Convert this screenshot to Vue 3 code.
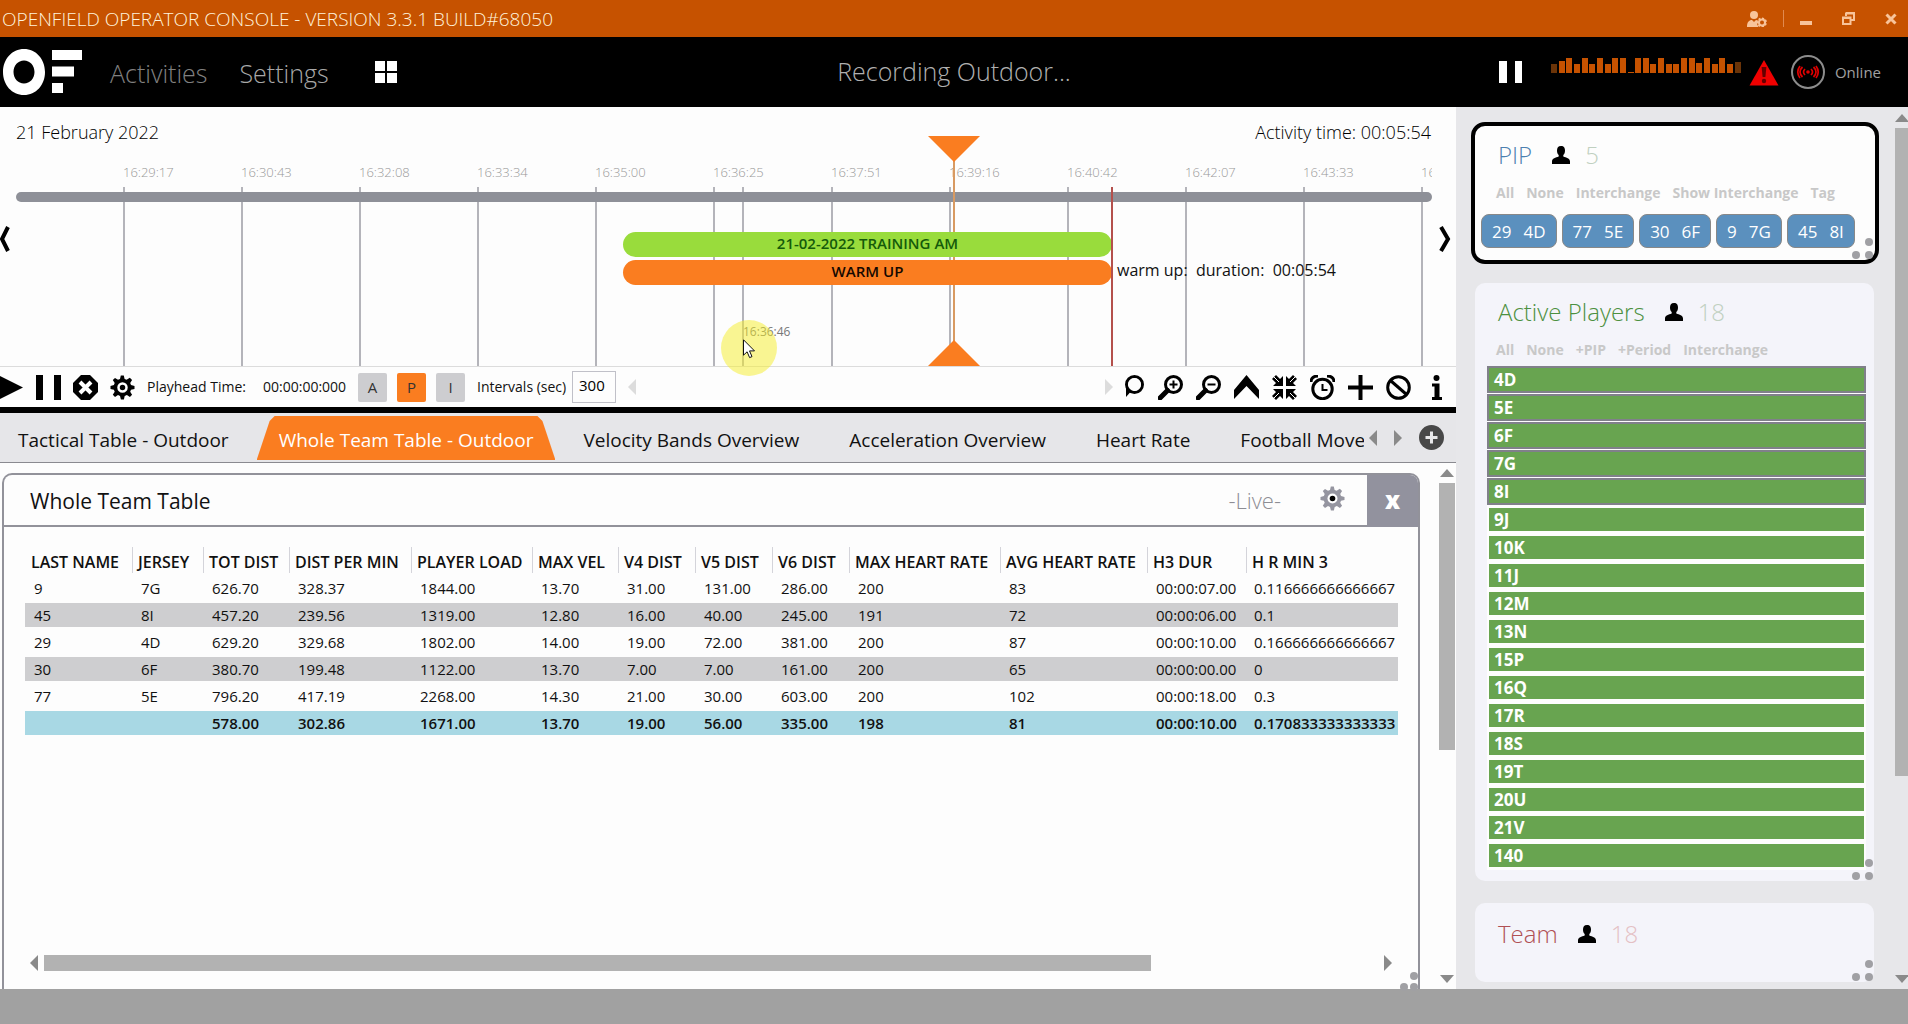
<script setup>
import { ref } from 'vue'

const signal = [9, 12, 15, 9, 15, 9, 15, 9, 15, 15, 1, 15, 15, 9, 15, 9, 9, 15, 15, 10, 15, 9, 15, 9, 11]

const span = 1456
const scaleSpan = 1432
const pct = (x, of = span) => (x / of) * 100 + '%'
const ticks = ['16:29:17', '16:30:43', '16:32:08', '16:33:34', '16:35:00', '16:36:25', '16:37:51', '16:39:16', '16:40:42', '16:42:07', '16:43:33', '16:44:58']
  .map((label, i) => ({ label, left: pct(123 + i * 118, scaleSpan) }))

const interval = ref(300)

const tabs = [
  { label: 'Tactical Table - Outdoor' },
  { label: 'Whole Team Table - Outdoor', active: true },
  { label: 'Velocity Bands Overview' },
  { label: 'Acceleration Overview' },
  { label: 'Heart Rate' },
  { label: 'Football Move' },
]

const columns = [
  { label: 'LAST NAME', width: 107 },
  { label: 'JERSEY', width: 71 },
  { label: 'TOT DIST', width: 86 },
  { label: 'DIST PER MIN', width: 122 },
  { label: 'PLAYER LOAD', width: 121 },
  { label: 'MAX VEL', width: 86 },
  { label: 'V4 DIST', width: 77 },
  { label: 'V5 DIST', width: 77 },
  { label: 'V6 DIST', width: 77 },
  { label: 'MAX HEART RATE', width: 151 },
  { label: 'AVG HEART RATE', width: 147 },
  { label: 'H3 DUR', width: 99 },
  { label: 'H R MIN 3', width: 152 },
]
const rows = [
  ['9', '7G', '626.70', '328.37', '1844.00', '13.70', '31.00', '131.00', '286.00', '200', '83', '00:00:07.00', '0.116666666666667'],
  ['45', '8I', '457.20', '239.56', '1319.00', '12.80', '16.00', '40.00', '245.00', '191', '72', '00:00:06.00', '0.1'],
  ['29', '4D', '629.20', '329.68', '1802.00', '14.00', '19.00', '72.00', '381.00', '200', '87', '00:00:10.00', '0.166666666666667'],
  ['30', '6F', '380.70', '199.48', '1122.00', '13.70', '7.00', '7.00', '161.00', '200', '65', '00:00:00.00', '0'],
  ['77', '5E', '796.20', '417.19', '2268.00', '14.30', '21.00', '30.00', '603.00', '200', '102', '00:00:18.00', '0.3'],
]
const totals = ['', '', '578.00', '302.86', '1671.00', '13.70', '19.00', '56.00', '335.00', '198', '81', '00:00:10.00', '0.170833333333333']

const pip = [['29', '4D'], ['77', '5E'], ['30', '6F'], ['9', '7G'], ['45', '8I']]
const pipActions = ['All', 'None', 'Interchange', 'Show Interchange', 'Tag']
const activeActions = ['All', 'None', '+PIP', '+Period', 'Interchange']
const players = ['4D', '5E', '6F', '7G', '8I', '9J', '10K', '11J', '12M', '13N', '15P', '16Q', '17R', '18S', '19T', '20U', '21V', '140']
  .map((name, i) => ({ name, selected: i < 5 }))

const person = 'M9 0c3 0 4 2 4 4.500c0 2-.6 3.500-1.700 4.500v1.500c3 1 6.700 2 6.700 5V18H0v-2.500c0-3 3.700-4 6.700-5V9C5.600 8 5 6.500 5 4.500C5 2 6 0 9 0z'
const gear = 'M10.800 0.500h3l.8 3.400 2 .8L19.800 2.800l2.300 2.200-1.900 3 .8 2 3.500.9v3l-3.500.8-.8 2 1.900 3-2.200 2.300-3-1.900-2.200.9-.8 3.400h-3l-.9-3.400-2-.9-3 1.900-2.200-2.300 1.900-3-.8-2L.500 14v-3l3.400-.9.8-2-1.900-3L5 2.900l3 1.800 2-.8z'
</script>

<template>
  <div class="app">
    <header class="titlebar">
      <h1 class="app-title">OPENFIELD OPERATOR CONSOLE - VERSION 3.3.1 BUILD#68050</h1>
      <div class="window-tools">
        <button class="bare" aria-label="Account">
          <svg width="20" height="16" viewBox="0 0 20 16"><circle cx="7" cy="4" r="4" /><path d="M0 16c0-5 2-7 5-7l2 2 2-2 2 .5-1 3.500 1.500 3z" /><circle cx="15" cy="11.500" r="3" fill="none" class="tool-line" /><path class="tool-line" stroke-dasharray="2 1.500" fill="none" d="M15 7.500a4 4 0 1 1-.1 0" /></svg>
        </button>
        <span class="divider"></span>
        <button class="bare" aria-label="Minimize"><svg width="12" height="14"><rect y="9" width="12" height="4" /></svg></button>
        <button class="bare" aria-label="Restore"><svg width="13" height="13" viewBox="0 0 13 13"><path class="tool-line" fill="none" d="M4 4V1.500h8V8H9.500M1 5.500h7.500V12H1z" /><path d="M0 5h9v2H0zM4 0h9v2H4z" /></svg></button>
        <button class="bare" aria-label="Close"><svg width="12" height="12" viewBox="0 0 12 12"><path d="M1.500 1.500l9 9M10.500 1.500l-9 9" class="close-line" /></svg></button>
      </div>
    </header>

    <div class="navbar">
      <nav class="nav">
        <svg class="logo" width="80" height="46" viewBox="0 0 80 46"><path fill="#fff" fill-rule="evenodd" d="M21 0c12 0 21 10 21 23s-9 23-21 23S0 36 0 23S9 0 21 0zM21 11.500c-6 0-10.500 5-10.500 11.500s4.500 11.500 10.500 11.500S31.500 29.500 31.500 23S27 11.500 21 11.500z" /><path fill="#fff" d="M49 1h30v10H49zM49 17.500h22v10H49zM49 34h11v10H49z" /></svg>
        <a href="#" class="nav-link dim">Activities</a>
        <a href="#" class="nav-link">Settings</a>
        <button class="bare tiles" aria-label="Layout"><svg width="22" height="22" fill="#fff"><path d="M0 0h10v10H0zM12 0h10v10H12zM0 12h10v10H0zM12 12h10v10H12z" /></svg></button>
      </nav>
      <p class="recording">Recording Outdoor...</p>
      <div class="status">
        <button class="bare" aria-label="Pause recording"><svg width="24" height="22" fill="#fff"><path d="M0 0h8v22H0zM16 0h7v22h-7z" /></svg></button>
        <div class="signal"><i v-for="(h, i) in signal" :key="i" :style="{ height: h + 'px' }"></i></div>
        <svg class="warning" width="30" height="27" viewBox="0 0 30 27"><path d="M15 1L29.500 26.500H.5z" fill="#f00000" /><path d="M12.600 8h4.800l-1 10h-2.800z" fill="#600" /><circle cx="15" cy="22" r="2.200" fill="#600" /></svg>
        <svg class="antenna" width="34" height="34" viewBox="0 0 34 34" fill="none"><circle cx="17" cy="17" r="16" stroke="#8c8c8c" stroke-width="2" /><circle cx="17" cy="17" r="1.800" fill="#e00000" /><path stroke="#e00000" stroke-width="1.700" d="M14 14c-2 2-2 4 0 6M20 14c2 2 2 4 0 6M11.500 12c-3.300 3-3.300 7 0 10M22.500 12c3.300 3 3.300 7 0 10M9 11c-3 4-3 8 0 12M25 11c3 4 3 8 0 12" /></svg>
        <span class="online">Online</span>
      </div>
    </div>

    <div class="body">
      <main class="workspace">
        <section class="timeline">
          <div class="timeline-head"><span>21 February 2022</span><span>Activity time: 00:05:54</span></div>
          <div class="canvas">
            <div class="scale">
              <div class="tick" v-for="t in ticks" :key="t.label" :style="{ left: t.left }"><time>{{ t.label }}</time></div>
              <div class="tick hover" :style="{ left: pct(742, scaleSpan) }"><time>16:36:46</time></div>
            </div>
            <div class="track"></div>
            <div class="playhead" :style="{ left: pct(953) }"></div>
            <div class="period training" :style="{ left: pct(623), width: pct(489) }">21-02-2022 TRAINING AM</div>
            <div class="period warmup" :style="{ left: pct(623), width: pct(489) }">WARM UP</div>
            <div class="end-line" :style="{ left: pct(1111) }"></div>
            <p class="duration" :style="{ left: pct(1117) }">warm up:&nbsp; duration:&nbsp; 00:05:54</p>
            <button class="bare pan left" aria-label="Earlier"><svg width="12" height="26" viewBox="0 0 12 26"><path d="M8 1L2 13l6 12" /></svg></button>
            <button class="bare pan right" aria-label="Later"><svg width="12" height="26" viewBox="0 0 12 26"><path d="M2 1l7 12-7 12" /></svg></button>
            <div class="halo" :style="{ left: pct(721) }"></div>
            <svg class="cursor" :style="{ left: pct(743) }" width="13" height="20" viewBox="0 0 13 20"><path d="M.5.800v15.400l3.600-3.400 2.500 5.800 2.400-1-2.500-5.700h5z" fill="#fff" stroke="#111" /></svg>
          </div>
        </section>

        <div class="controls">
          <div class="transport">
            <button class="bare" aria-label="Play"><svg width="23" height="25"><path d="M0 1l23 11.500L0 24z" /></svg></button>
            <button class="bare pause" aria-label="Pause"><svg width="25" height="25"><path d="M0 0h7v25H0zM18 0h7v25h-7z" /></svg></button>
            <button class="bare" aria-label="Stop"><svg width="25" height="25" viewBox="0 0 25 25"><path d="M8 0h9l8 8v9l-8 8H8l-8-8V8z" /><path d="M7 7l11 11M18 7L7 18" stroke="#fff" stroke-width="4" /></svg></button>
            <button class="bare" aria-label="Options"><svg width="25" height="25" viewBox="0 0 25 25"><path :d="gear" /><circle cx="12.500" cy="12.500" r="4" fill="none" stroke="#fff" stroke-width="2.500" /></svg></button>
            <span class="label play-label">Playhead Time:</span>
            <output class="label play-time">00:00:00:000</output>
            <button class="mode">A</button>
            <button class="mode on">P</button>
            <button class="mode">I</button>
            <label class="label int-label" for="interval">Intervals (sec)</label>
            <input id="interval" v-model="interval" type="text" class="interval" />
            <svg class="faint" width="8" height="16"><path d="M8 0v16L0 8z" /></svg>
          </div>
          <div class="tools">
            <svg class="faint more" width="8" height="16"><path d="M0 0v16l8-8z" /></svg>
            <button class="bare tool" aria-label="Zoom reset"><svg width="25" height="25" viewBox="0 0 25 25"><circle cx="14.500" cy="9.500" r="8" class="k3" /><path d="M6 9v13l4-4.500 4-1z" /><circle cx="14.500" cy="9.500" r="6.500" fill="#fdfdfd" /></svg></button>
            <button class="bare tool" aria-label="Zoom in"><svg width="25" height="25" viewBox="0 0 25 25"><circle cx="15.500" cy="9.500" r="8" class="k3" /><path d="M2 23l7.500-7.500" class="k4" /><path d="M11.500 9.500h8M15.500 5.500v8" class="k2" /></svg></button>
            <button class="bare tool" aria-label="Zoom out"><svg width="25" height="25" viewBox="0 0 25 25"><circle cx="15.500" cy="9.500" r="8" class="k3" /><path d="M2 23l7.500-7.500" class="k4" /><path d="M11.500 9.500h8" class="k2" /></svg></button>
            <button class="bare tool" aria-label="Collapse"><svg width="25" height="25" viewBox="0 0 25 25"><path d="M12.500 0L25 15v9L12.500 11 0 24v-9z" /></svg></button>
            <button class="bare tool" aria-label="Fit"><svg width="25" height="25" viewBox="0 0 25 25"><path d="M11 11H1l3-3-4-4 4-4 4 4 3-3zM14 11V1l3 3 4-4 4 4-4 4 3 3zM11 14v10l-3-3-4 4-4-4 4-4-3-3zM14 14h10l-3 3 4 4-4 4-4-4-3 3z" /><path d="M0 0l7 7M25 0l-7 7M0 25l7-7M25 25l-7-7" stroke="#fff" stroke-width="1" /></svg></button>
            <button class="bare tool" aria-label="Alarm"><svg width="25" height="25" viewBox="0 0 25 25"><circle cx="12.500" cy="14" r="9.700" class="k25" /><path d="M12.500 9v6h5" class="k2" /><path d="M1 7c0-4 3-6 7-6M24 7c0-4-3-6-7-6" class="k25" /></svg></button>
            <button class="bare tool" aria-label="Add"><svg width="25" height="25"><path d="M10.500 0h4v10.500H25v4H14.500V25h-4V14.500H0v-4h10.500z" /></svg></button>
            <button class="bare tool" aria-label="Disable"><svg width="25" height="25" viewBox="0 0 25 25"><circle cx="12.500" cy="12.500" r="10.800" class="k3" /><path d="M5 6l15 13" class="k3" /></svg></button>
            <button class="bare tool" aria-label="Information"><svg width="25" height="25" viewBox="0 0 25 25"><circle cx="12.500" cy="3" r="3" /><path d="M8 8.500h7.500V22H18v3H8v-3h2.500V11.500H8z" /></svg></button>
          </div>
        </div>

        <div class="tabbar">
          <div class="tabs" role="tablist">
            <button v-for="t in tabs" :key="t.label" class="tab" :class="{ active: t.active }" role="tab" :aria-selected="!!t.active">{{ t.label }}</button>
          </div>
          <button class="bare" aria-label="Scroll tabs left"><svg width="8" height="16" fill="#8a8a8a"><path d="M8 0v16L0 8z" /></svg></button>
          <button class="bare next" aria-label="Scroll tabs right"><svg width="8" height="16" fill="#8a8a8a"><path d="M0 0v16l8-8z" /></svg></button>
          <button class="bare add" aria-label="Add tab"><svg width="25" height="25" viewBox="0 0 25 25"><circle cx="12.500" cy="12.500" r="12.500" fill="#484848" /><path d="M6.500 12.500h12M12.500 6.500v12" stroke="#e8e8ea" stroke-width="3" /></svg></button>
        </div>

        <div class="stage">
          <section class="panel">
            <header class="panel-head">
              <h2>Whole Team Table</h2>
              <span class="live">-Live-</span>
              <button class="bare gear" aria-label="Table settings"><svg width="25" height="25" viewBox="0 0 25 25"><path :d="gear" fill="#9595a0" /><circle cx="12.500" cy="12.500" r="5" fill="#fff" /><circle cx="12.500" cy="12.500" r="2.800" /></svg></button>
              <button class="close">x</button>
            </header>
            <div class="table-wrap">
              <table>
                <colgroup><col v-for="c in columns" :key="c.label" :style="{ width: c.width + 'px' }" /></colgroup>
                <thead><tr><th v-for="c in columns" :key="c.label" scope="col">{{ c.label }}</th></tr></thead>
                <tbody>
                  <tr v-for="r in rows" :key="r[0]"><td v-for="(v, i) in r" :key="i">{{ v }}</td></tr>
                </tbody>
                <tfoot><tr><td v-for="(v, i) in totals" :key="i">{{ v }}</td></tr></tfoot>
              </table>
            </div>
            <div class="hscroll">
              <svg width="8" height="16"><path d="M8 0v16L0 8z" /></svg>
              <div class="hrail"><div class="hthumb"></div></div>
              <svg width="8" height="16"><path d="M0 0v16l8-8z" /></svg>
            </div>
            <svg class="grip" width="21" height="21"><circle cx="17" cy="6" r="4" /><circle cx="7" cy="17" r="4" /><circle cx="17" cy="17" r="4" /></svg>
          </section>
          <div class="vscroll">
            <svg width="14" height="8"><path d="M0 8h14L7 0z" /></svg>
            <div class="vrail"><div class="vthumb"></div></div>
            <svg width="14" height="8"><path d="M0 0h14L7 8z" /></svg>
          </div>
        </div>
      </main>

      <aside class="side">
        <div class="cards">
          <section class="card pip">
            <h3><span class="blue">PIP</span><svg width="18" height="18" viewBox="0 0 18 18"><path :d="person" /></svg><span class="count">5</span></h3>
            <div class="actions"><button v-for="a in pipActions" :key="a" class="action">{{ a }}</button></div>
            <div class="chips"><button v-for="p in pip" :key="p[0]" class="chip"><span>{{ p[0] }}</span><span>{{ p[1] }}</span></button></div>
            <svg class="grip" width="21" height="21"><circle cx="17" cy="4" r="4" /><circle cx="4" cy="17" r="4" /><circle cx="17" cy="17" r="4" /></svg>
          </section>
          <section class="card active-players">
            <h3><span class="green">Active Players</span><svg width="18" height="18" viewBox="0 0 18 18"><path :d="person" /></svg><span class="count">18</span></h3>
            <div class="actions"><button v-for="a in activeActions" :key="a" class="action">{{ a }}</button></div>
            <ul class="players">
              <li v-for="p in players" :key="p.name"><button class="player" :class="{ selected: p.selected }">{{ p.name }}</button></li>
            </ul>
            <svg class="grip" width="21" height="21"><circle cx="17" cy="4" r="4" /><circle cx="4" cy="17" r="4" /><circle cx="17" cy="17" r="4" /></svg>
          </section>
          <section class="card team">
            <h3><span class="red">Team</span><svg width="18" height="18" viewBox="0 0 18 18"><path :d="person" /></svg><span class="count pink">18</span></h3>
            <svg class="grip" width="21" height="21"><circle cx="17" cy="4" r="4" /><circle cx="4" cy="17" r="4" /><circle cx="17" cy="17" r="4" /></svg>
          </section>
        </div>
        <div class="vscroll side-scroll">
          <svg width="14" height="8"><path d="M0 8h14L7 0z" /></svg>
          <div class="vrail"><div class="vthumb"></div></div>
          <svg width="14" height="8"><path d="M0 0h14L7 8z" /></svg>
        </div>
      </aside>
    </div>
    <footer class="footer"></footer>
  </div>
</template>

<style>
body { margin: 0; background: #a1a1a1; }
</style>

<style scoped>
* { box-sizing: border-box; }
.app { display: flex; flex-direction: column; min-height: 100vh; font-family: "Open Sans", "Noto Sans", sans-serif; color: #111; overflow: hidden; }
h1, h2, h3, p, ul { margin: 0; padding: 0; font-weight: 400; }
button { font-family: inherit; }
svg { display: block; flex: none; }
.bare { border: 0; background: none; padding: 0; display: block; flex: none; }

.titlebar { height: 37px; background: #c65200; display: flex; align-items: center; justify-content: space-between; padding: 0 11px 0 2px; }
.app-title { font-size: 19px; line-height: 36px; font-weight: 300; color: #fff3dc; white-space: nowrap; }
.window-tools { display: flex; align-items: center; fill: #f8c49a; gap: 30px; }
.tool-line { stroke: #f8c49a; stroke-width: 2; }
.close-line { stroke: #f8c49a; stroke-width: 3; }
.divider { width: 1px; height: 17px; background: #e08a50; margin: 0 -14px; }

.navbar { height: 70px; background: #000; display: grid; grid-template-columns: 1fr auto 1fr; align-items: center; }
.nav { display: flex; align-items: center; padding-left: 3px; }
.nav-link { font-size: 25px; line-height: 32px; margin-left: 32px; color: #a8a8a8; text-decoration: none; font-weight: 300; margin-top: 2px; }
.nav-link.dim { color: #808080; margin-left: 27px; }
.tiles { margin-left: 46px; }
.recording { font-size: 25px; line-height: 32px; padding-bottom: 2px; color: #b0b0b0; font-weight: 300; }
.status { display: flex; align-items: center; justify-content: flex-end; padding-right: 27px; }
.signal { display: flex; align-items: flex-end; justify-content: space-between; height: 15px; width: 190px; margin: 0 8px 14px 28px; }
.signal i { width: 6px; background: #c65200; }
.signal i:first-child, .signal i:last-child { background: #6b3408; }
.antenna { margin: 0 10px 0 12px; }
.online { font-size: 15px; line-height: 20px; color: #a0a0a0; }

.body { flex: 1; display: flex; background: #e7e7ea; }
.workspace { flex: 1; min-width: 0; display: flex; flex-direction: column; background: #fdfdfd; }
.timeline { height: 260px; border-bottom: 1px solid #dcdcdc; position: relative; }
.timeline-head { display: flex; justify-content: space-between; padding: 11px 25px 0 16px; font-size: 18px; line-height: 28px; font-weight: 300; color: #000; }
.canvas { position: absolute; inset: 0; }
.scale { position: absolute; inset: 0 24px 0 0; overflow: hidden; }
.tick { position: absolute; top: 80px; bottom: 0; border-left: 2px solid #b4b4ba; }
.tick time { position: absolute; top: -24px; left: -2px; font-size: 13px; line-height: 18px; font-weight: 300; color: #999; }
.tick.hover time { top: 136px; left: -1px; font-size: 12px; color: #777; font-weight: 400; }
.track { position: absolute; left: 16px; right: 24px; top: 85px; height: 10px; border-radius: 5px; background: #8e9098; }
.period { position: absolute; height: 25px; border-radius: 13px; text-align: center; font-size: 15px; line-height: 23px; font-weight: 600; }
.training { top: 125px; background: #99dc3c; color: #145a0a; }
.warmup { top: 153px; background: #fa7d20; color: #140800; }
.end-line { position: absolute; top: 80px; bottom: 0; width: 2px; background: #b4504c; }
.duration { position: absolute; top: 150px; font-size: 16px; line-height: 26px; white-space: nowrap; }
.playhead { position: absolute; top: 29px; bottom: 0; width: 2px; background: #d89a62; }
.playhead::before, .playhead::after { content: ""; position: absolute; left: -25px; width: 52px; height: 26px; background: #fa7d20; clip-path: polygon(0 0, 100% 0, 50% 100%); }
.playhead::after { bottom: 0; clip-path: polygon(0 100%, 100% 100%, 50% 0); }
.pan { position: absolute; top: 119px; fill: none; stroke: #000; stroke-width: 4; }
.pan.left { left: 0; }
.pan.right { right: 5px; }
.halo { position: absolute; top: 213px; width: 56px; height: 56px; border-radius: 50%; background: rgba(246, 238, 40, .5); }
.cursor { position: absolute; top: 232px; }

.controls { display: flex; justify-content: space-between; align-items: center; height: 40px; padding-right: 7px; }
.transport, .tools { display: flex; align-items: center; height: 40px; }
.transport .bare { margin-right: 12px; }
.transport .bare:first-child { margin-right: 13px; }
.label { font-size: 14px; line-height: 20px; white-space: nowrap; }
.play-label { width: 116px; }
.play-time { width: 95px; }
.mode { width: 29px; height: 29px; border: 0; border-radius: 2px; background: #cdcdd0; color: #333; font-size: 15px; margin-right: 10px; padding: 0; }
.mode.on { background: #fa7d20; }
.int-label { width: 95px; margin-left: 2px; }
.interval { width: 44px; height: 32px; border: 1px solid #c0c0c8; background: #fdfdfd; font: 15px "Open Sans", sans-serif; padding: 0 0 4px 6px; margin-right: 12px; }
.faint { fill: #dcdcdc; }
.tools { gap: 13px; }
.more { margin-right: -6px; }
.k2, .k25, .k3, .k4 { fill: none; stroke: #000; stroke-width: 2; }
.k25 { stroke-width: 3; }
.k3 { stroke-width: 3; }
.k4 { stroke-width: 5; stroke-linecap: round; }

.tabbar { border-top: 6px solid #000; border-bottom: 1px solid #8a8a90; background: #e6e6e9; height: 56px; display: flex; align-items: center; padding-right: 12px; }
.tabs { flex: 1; min-width: 0; display: flex; align-items: flex-end; height: 49px; gap: 6px; padding: 0 0 2px; margin-left: -4px; overflow: hidden; margin-right: 5px; }
.tab { height: 44px; border: 0; background: none; font-size: 19px; font-weight: 400; color: #111; padding: 3px 22px 0; white-space: nowrap; flex: none; }
.tab.active { background: #fa7d20; color: #fff; clip-path: polygon(0 100%, 13px 5px, 18px 0, calc(100% - 18px) 0, calc(100% - 13px) 5px, 100% 100%); }
.next { margin: 0 17px; }

.stage { flex: 1; display: flex; justify-content: space-between; padding: 10px 1px 0 2px; }
.panel { flex: 1; display: flex; flex-direction: column; border: 2px solid #92929a; border-bottom: 0; border-radius: 10px 10px 0 0; margin-right: 19px; position: relative; min-width: 0; }
.panel-head { height: 52px; border-bottom: 2px solid #92929a; display: flex; align-items: center; padding-left: 26px; flex: none; }
h2 { font-size: 21px; line-height: 28px; flex: 1; padding-top: 2px; }
.live { font-size: 22px; line-height: 28px; color: #8d8d94; font-weight: 300; margin-right: 39px; }
.gear { margin-bottom: 3px; }
.close { width: 51px; height: 52px; border: 0; border-radius: 0 8px 0 0; background: #92929e; color: #fff; font-size: 24px; line-height: 28px; font-weight: 800; margin: 0 0 -2px 22px; padding: 0 0 3px; }
.table-wrap { margin: 17px 20px 0 21px; overflow: hidden; }
table { border-collapse: separate; border-spacing: 0 3px; table-layout: fixed; width: 100%; }
th, td { padding: 1px 0 0 9px; text-align: left; height: 24px; font-size: 15px; line-height: 23px; white-space: nowrap; overflow: hidden; }
th { font-size: 16px; height: 26px; font-weight: 600; padding: 4px 0 0 5px; line-height: 22px; border-left: 1px solid #d4d4da; }
th:first-child { border-left: 0; padding-left: 6px; }
tbody tr:nth-child(even) td { background: #ceced0; }
tfoot td { background: #a8d8e4; font-weight: 600; }
td:last-child { padding-left: 8px; }
.hscroll { margin: auto 26px 18px; display: flex; align-items: center; gap: 6px; fill: #8a8a8a; }
.hrail { flex: 1; }
.hthumb { width: 83%; height: 16px; background: #b2b2b2; }
.grip { position: absolute; right: 0; bottom: 0; fill: #a0a0a4; }
.panel .grip { bottom: -2px; right: 0; }
.vscroll { width: 16px; display: flex; flex-direction: column; align-items: center; fill: #8a8a8a; gap: 6px; margin: -4px 0 6px; }
.vrail { flex: 1; align-self: stretch; }
.vthumb { height: 55%; background: #b2b2b2; }

.side { width: 452px; display: flex; }
.cards { flex: 1; display: flex; flex-direction: column; padding: 15px 16px 0 15px; }
.card { position: relative; background: #f4f4fa; border-radius: 10px; margin: 0 5px 0 4px; padding: 14px 0 0 23px; }
.card.pip { margin: 0; background: #fdfdfd; border: 4px solid #000; border-radius: 14px; height: 142px; padding: 12px 0 0 23px; }
h3 { display: flex; align-items: center; font-size: 24px; line-height: 34px; font-weight: 300; }
h3 svg { margin: 0 15px 0 20px; }
.blue { color: #4c80b0; }
.green { color: #4c9040; }
.red { color: #b05054; }
.count { color: #c0d0c0; }
.count.pink { color: #e4c0c4; }
.actions { display: flex; gap: 12px; margin: 11px 0 0 -2px; }
.action { border: 0; background: none; padding: 0; font-size: 14px; line-height: 20px; font-weight: 700; color: #c8c8c8; white-space: nowrap; }
.chips { display: flex; gap: 5px; margin: 11px 0 0 -17px; }
.chip { height: 34px; padding: 0 10px; border: 1px solid #888; border-radius: 8px; background: #5b90be; color: #fff; font-size: 17px; display: flex; align-items: center; gap: 12px; }
.pip .grip { right: 2px; bottom: 1px; }
.active-players { margin-top: 19px; height: 598px; }
.active-players h3 { margin-top: -2px; }
.players { list-style: none; background: #fdfdfd; margin: 6px 8px 0 -11px; }
.players li { height: 28px; padding-top: 2px; }
.players li:has(.selected) { padding-top: 0; }
.player { display: block; width: calc(100% - 4px); margin: 0 2px; height: 23px; border: 0; background: #68a450; color: #fff; font-size: 17px; line-height: 22px; font-weight: 700; text-align: left; padding: 1px 5px 0; }
.player.selected { width: 100%; margin: 0; height: 27px; border: 2px solid #80808a; }
.active-players .grip, .team .grip { right: 1px; bottom: 1px; }
.team { margin-top: 22px; height: 79px; }
.side-scroll { width: 13px; margin: 7px 0 6px; overflow: hidden; }
.side-scroll .vthumb { height: 77%; }

.footer { height: 35px; background: #a1a1a1; }
</style>
